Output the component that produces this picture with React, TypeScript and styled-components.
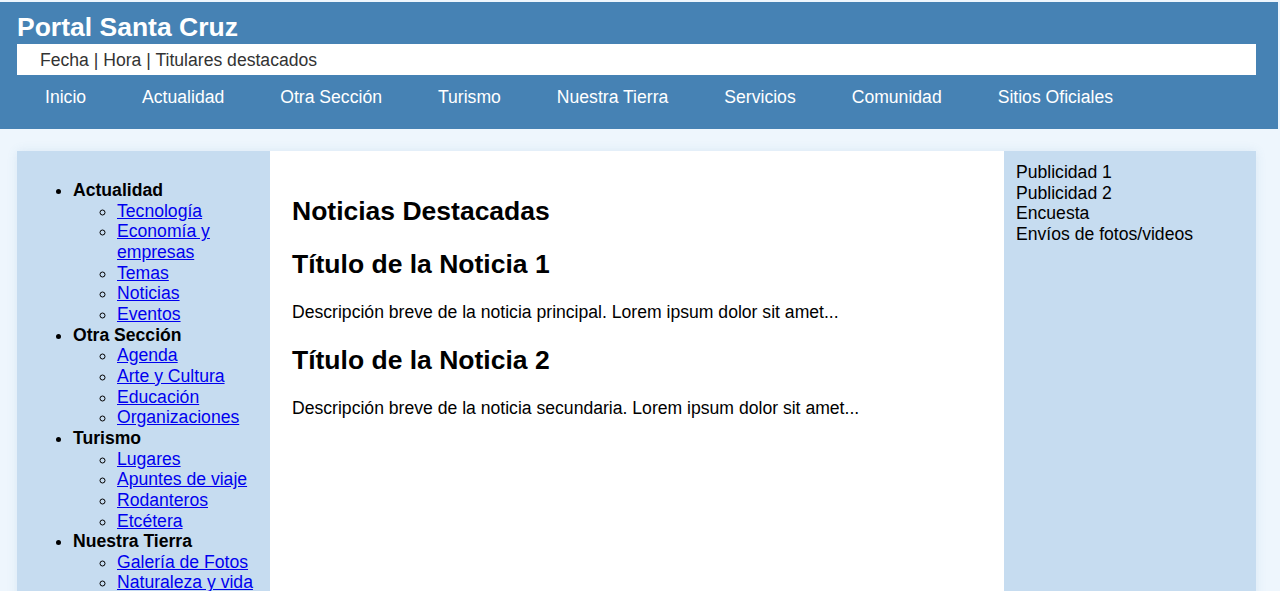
import React from 'react';
import styled, { createGlobalStyle } from 'styled-components';

const GlobalStyle = createGlobalStyle`
  html, body {
    margin: 0;
    padding: 0;
  }
  body {
    background: #eef6fd;
    font-family: "Liberation Sans", Arial, sans-serif;
    font-size: 17.6px;
    line-height: 20.65px;
    color: #000;
    padding-top: 2px;
    padding-right: 2px;
  }
`;

const Header = styled.header`
  background: #4682b4;
  color: #fff;
  padding: 10px 22px 11px 17px;
`;

const SiteTitle = styled.h1`
  margin: 0;
  font-size: 26.5px;
  line-height: 31px;
  font-weight: bold;
`;

const InfoBar = styled.div`
  margin-top: 1px;
  background: #fff;
  color: #333;
  height: 31px;
  line-height: 33px;
  padding: 0 23px;
  box-sizing: border-box;
`;

const Nav = styled.nav`
  padding: 12px 0 10px;
`;

const NavList = styled.ul`
  display: flex;
  list-style: none;
  margin: 0;
  padding: 0;
`;

const NavItem = styled.li`
  padding: 0 28px;
  line-height: 21px;
  a {
    color: #fff;
    text-decoration: none;
  }
`;

const Main = styled.main`
  margin: 22px 22px 0 17px;
  display: grid;
  grid-template-columns: 253px 1fr 252px;
  box-shadow: 0 0 10px rgba(70, 130, 180, 0.12);
`;

const Sidebar = styled.aside`
  background: #c6dcf0;
  padding: 11px;
`;

const RightSidebar = styled(Sidebar)`
  padding: 11px 11px 11px 12px;
`;

const SectionList = styled.ul`
  margin: 18px 0;
  padding-left: 45px;
  list-style: disc;
`;

const SectionItem = styled.li`
  font-weight: bold;
`;

const SubList = styled.ul`
  margin: 0;
  padding-left: 44px;
  list-style: circle;
  font-weight: normal;
`;

const SubLink = styled.a`
  color: #0000ee;
`;

const Content = styled.section`
  background: #fff;
  padding: 23px 22px 22px;
  min-height: 480px;
`;

const Heading = styled.h2`
  font-size: 26.5px;
  line-height: 31px;
  margin: 22px 0;
`;

const Summary = styled.p`
  margin: 18px 0;
`;

const ExtraList = styled.div`
  display: flex;
  flex-direction: column;
`;

const navItems = ['Inicio', 'Actualidad', 'Otra Sección', 'Turismo', 'Nuestra Tierra', 'Servicios', 'Comunidad', 'Sitios Oficiales'];

const sections: { title: string; links: string[] }[] = [
  { title: 'Actualidad', links: ['Tecnología', 'Economía y empresas', 'Temas', 'Noticias', 'Eventos'] },
  { title: 'Otra Sección', links: ['Agenda', 'Arte y Cultura', 'Educación', 'Organizaciones'] },
  { title: 'Turismo', links: ['Lugares', 'Apuntes de viaje', 'Rodanteros', 'Etcétera'] },
  { title: 'Nuestra Tierra', links: ['Galería de Fotos', 'Naturaleza y vida', 'Historia', 'Leyendas'] },
];

const news = [
  { title: 'Título de la Noticia 1', text: 'Descripción breve de la noticia principal. Lorem ipsum dolor sit amet...' },
  { title: 'Título de la Noticia 2', text: 'Descripción breve de la noticia secundaria. Lorem ipsum dolor sit amet...' },
];

const App: React.FC = () => (
  <>
    <GlobalStyle />
    <Header>
      <SiteTitle>Portal Santa Cruz</SiteTitle>
      <InfoBar>Fecha | Hora | Titulares destacados</InfoBar>
      <Nav>
        <NavList>
          {navItems.map((item) => (
            <NavItem key={item}>
              <a href="#">{item}</a>
            </NavItem>
          ))}
        </NavList>
      </Nav>
    </Header>

    <Main>
      <Sidebar>
        <SectionList>
          {sections.map((s) => (
            <SectionItem key={s.title}>
              {s.title}
              <SubList>
                {s.links.map((l) => (
                  <li key={l}>
                    <SubLink href="#">{l}</SubLink>
                  </li>
                ))}
              </SubList>
            </SectionItem>
          ))}
        </SectionList>
      </Sidebar>

      <Content>
        <Heading>Noticias Destacadas</Heading>
        {news.map((n) => (
          <article key={n.title}>
            <Heading>{n.title}</Heading>
            <Summary>{n.text}</Summary>
          </article>
        ))}
      </Content>

      <RightSidebar>
        <ExtraList>
          <span>Publicidad 1</span>
          <span>Publicidad 2</span>
          <span>Encuesta</span>
          <span>Envíos de fotos/videos</span>
        </ExtraList>
      </RightSidebar>
    </Main>
  </>
);

export default App;
